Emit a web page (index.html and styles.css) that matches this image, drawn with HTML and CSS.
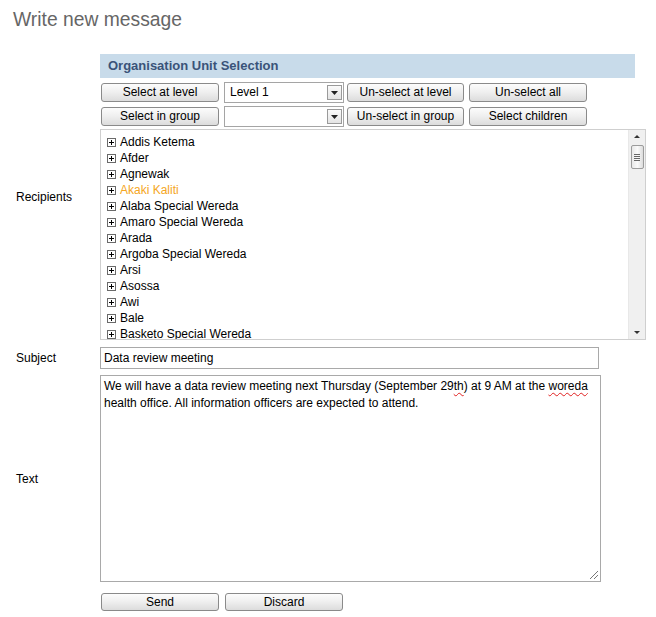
FILE: index.html
```html
<!DOCTYPE html>
<html>
<head>
<meta charset="utf-8">
<link rel="stylesheet" href="styles.css">
</head>
<body>
<h1 class="title">Write new message</h1>
<div class="form">
  <div class="label label-recipients">Recipients</div>
  <div class="ou">
    <div class="ou-header">Organisation Unit Selection</div>
    <div class="ou-row">
      <button class="btn">Select at level</button>
      <div class="select"><span class="select-text">Level 1</span><span class="select-arrow"><svg width="7" height="4" viewBox="0 0 7 4"><path d="M0 0H7L3.5 4Z" fill="#222"/></svg></span></div>
      <button class="btn btn-narrow">Un-select at level</button>
      <button class="btn">Un-select all</button>
    </div>
    <div class="ou-row">
      <button class="btn">Select in group</button>
      <div class="select"><span class="select-text"></span><span class="select-arrow"><svg width="7" height="4" viewBox="0 0 7 4"><path d="M0 0H7L3.5 4Z" fill="#222"/></svg></span></div>
      <button class="btn btn-narrow">Un-select in group</button>
      <button class="btn">Select children</button>
    </div>
    <div class="tree">
      <ul class="tree-list">
        <li><span class="plus"></span>Addis Ketema</li>
        <li><span class="plus"></span>Afder</li>
        <li><span class="plus"></span>Agnewak</li>
        <li class="selected"><span class="plus"></span>Akaki Kaliti</li>
        <li><span class="plus"></span>Alaba Special Wereda</li>
        <li><span class="plus"></span>Amaro Special Wereda</li>
        <li><span class="plus"></span>Arada</li>
        <li><span class="plus"></span>Argoba Special Wereda</li>
        <li><span class="plus"></span>Arsi</li>
        <li><span class="plus"></span>Asossa</li>
        <li><span class="plus"></span>Awi</li>
        <li><span class="plus"></span>Bale</li>
        <li><span class="plus"></span>Basketo Special Wereda</li>
      </ul>
      <div class="scrollbar">
        <span class="sb-up"></span>
        <span class="sb-thumb"><span class="grip"></span></span>
        <span class="sb-down"></span>
      </div>
    </div>
  </div>

  <div class="label">Subject</div>
  <div class="subject">Data review meeting</div>

  <div class="label">Text</div>
  <div class="textarea">We will have a data review meeting next Thursday (September 29<span class="spell">th</span>) at 9 AM at the <span class="spell">woreda</span> health office. All information officers are expected to attend.<span class="resize"></span></div>

  <div></div>
  <div class="actions">
    <button class="btn btn-action">Send</button>
    <button class="btn btn-action">Discard</button>
  </div>
</div>
</body>
</html>
```

FILE: styles.css
```css
html, body {
  margin: 0;
  padding: 0;
  background: #fff;
}
body {
  font-family: "Liberation Sans", Arial, sans-serif;
  font-size: 12px;
  color: #000;
}
.title {
  margin: 0;
  padding: 9px 0 0 13px;
  font-size: 19.3px;
  font-weight: normal;
  color: #666;
  line-height: 22px;
  height: 54px;
  box-sizing: border-box;
}
.form {
  display: grid;
  grid-template-columns: 84px 546px;
  padding-left: 16px;
  row-gap: 6px;
  align-items: center;
}
.label {
  font-size: 12px;
}
.ou {
  display: flex;
  flex-direction: column;
}
.ou-header {
  background: #c8dbea;
  color: #3a5379;
  font-weight: bold;
  font-size: 13px;
  height: 24px;
  line-height: 24px;
  padding-left: 8px;
  width: 535px;
  box-sizing: border-box;
  margin-bottom: 4px;
}
.ou-row {
  display: flex;
  align-items: center;
  height: 20px;
  margin-bottom: 4px;
  padding-left: 1px;
}
.btn {
  font-family: "Liberation Sans", Arial, sans-serif;
  font-size: 12px;
  color: #000;
  height: 19px;
  width: 118px;
  padding: 0;
  border: 1px solid #8a8a8a;
  border-radius: 3px;
  background: linear-gradient(#fcfcfc 0%, #f0f0f0 45%, #dcdcdc 100%);
  line-height: 17px;
  box-sizing: border-box;
}
.btn-narrow {
  width: 117px;
  margin-left: 3px;
  margin-right: 5px;
}
.select {
  margin-left: 5px;
  width: 120px;
  height: 21px;
  border: 1px solid #a5a5a5;
  box-sizing: border-box;
  display: flex;
  align-items: center;
  background: #fff;
}
.select-text {
  flex: 1;
  padding-left: 5px;
}
.select-arrow {
  width: 15px;
  height: 15px;
  border: 1px solid #9a9a9a;
  box-sizing: border-box;
  margin-right: 1px;
  background: linear-gradient(#fafafa, #e4e4e4);
  display: flex;
  align-items: center;
  justify-content: center;
  padding-top: 2px;
}
.tree {
  margin-top: -1px;
  height: 211px;
  width: 546px;
  border: 1px solid #cfcfcf;
  box-sizing: border-box;
  display: flex;
  overflow: hidden;
}
.tree-list {
  list-style: none;
  margin: 0;
  padding: 4px 0 0 6px;
  flex: 1;
  overflow: hidden;
}
.tree-list li {
  height: 16px;
  line-height: 16px;
  display: flex;
  align-items: center;
  white-space: nowrap;
}
.tree-list li.selected {
  color: #f5a623;
}
.plus {
  width: 9px;
  height: 9px;
  border: 1px solid #6a6a6a;
  box-sizing: border-box;
  margin-right: 4px;
  position: relative;
  background: #fff;
}
.plus::before, .plus::after {
  content: "";
  position: absolute;
  background: #000;
}
.plus::before {
  left: 1px;
  top: 3px;
  width: 5px;
  height: 1px;
}
.plus::after {
  left: 3px;
  top: 1px;
  width: 1px;
  height: 5px;
}
.scrollbar {
  width: 16px;
  background: #f0f0f0;
  border-left: 1px solid #e8e8e8;
  position: relative;
  display: flex;
  flex-direction: column;
  align-items: center;
}
.sb-up {
  margin-top: 5px;
  width: 0;
  height: 0;
  border-left: 3px solid transparent;
  border-right: 3px solid transparent;
  border-bottom: 3px solid #333;
}
.sb-thumb {
  margin-top: 7px;
  width: 13px;
  height: 24px;
  border: 1px solid #9c9c9c;
  border-radius: 2px;
  box-sizing: border-box;
  background: linear-gradient(90deg, #e8e8e8, #fafafa 50%, #dcdcdc);
  display: flex;
  align-items: center;
  justify-content: center;
}
.grip {
  width: 6px;
  height: 7px;
  background: repeating-linear-gradient(#666 0 1px, transparent 1px 2px);
}
.sb-down {
  margin-top: auto;
  margin-bottom: 5px;
  width: 0;
  height: 0;
  border-left: 3px solid transparent;
  border-right: 3px solid transparent;
  border-top: 3px solid #333;
}
.subject {
  width: 499px;
  height: 22px;
  border: 1px solid #a9a9a9;
  box-sizing: border-box;
  padding-left: 3px;
  line-height: 20px;
  margin-top: 1px;
}
.textarea {
  width: 501px;
  height: 207px;
  border: 1px solid #a9a9a9;
  box-sizing: border-box;
  padding: 2px 3px;
  line-height: 17px;
  position: relative;
}
.spell {
  text-decoration: underline wavy #e02020;
  text-decoration-thickness: 1px;
  text-underline-offset: 2px;
}
.resize {
  position: absolute;
  right: 2px;
  bottom: 2px;
  width: 8px;
  height: 8px;
  background: linear-gradient(135deg, transparent 0 45%, #777 45% 52%, transparent 52% 70%, #777 70% 77%, transparent 77%);
}
.actions {
  display: flex;
  gap: 6px;
  padding-left: 1px;
  margin-top: 5px;
}
.btn-action {
  width: 118px;
  height: 18px;
  line-height: 16px;
}
```
